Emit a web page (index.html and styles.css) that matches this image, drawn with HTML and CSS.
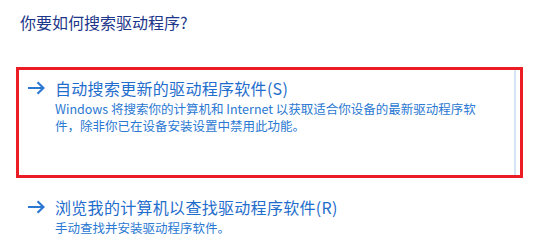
FILE: index.html
```html
<!DOCTYPE html>
<html lang="zh-CN">
<head>
<meta charset="utf-8">
<link rel="stylesheet" href="styles.css">
</head>
<body>
<div class="page">
  <h1 class="title">你要如何搜索驱动程序?</h1>
  <div class="options">
    <div class="highlight">
      <div class="option hovered">
        <svg class="arrow" width="18" height="14" viewBox="0 0 18 14"><path d="M1 7H16.5M10.5 1.2L16.5 7L10.5 12.8" fill="none" stroke="#2a78d2" stroke-width="2.2"/></svg>
        <div class="texts">
          <div class="head">自动搜索更新的驱动程序软件(S)</div>
          <div class="desc">Windows 将搜索你的计算机和 Internet 以获取适合你设备的最新驱动程序软件，除非你已在设备安装设置中禁用此功能。</div>
        </div>
      </div>
    </div>
    <div class="option plain">
      <svg class="arrow" width="18" height="14" viewBox="0 0 18 14"><path d="M1 7H16.5M10.5 1.2L16.5 7L10.5 12.8" fill="none" stroke="#2a78d2" stroke-width="2.2"/></svg>
      <div class="texts">
        <div class="head">浏览我的计算机以查找驱动程序软件(R)</div>
        <div class="desc">手动查找并安装驱动程序软件。</div>
      </div>
    </div>
  </div>
</div>
</body>
</html>
```
FILE: styles.css
```css
html, body {
  margin: 0;
  padding: 0;
  background: #ffffff;
}
body {
  font-family: "Noto Sans CJK SC", "Noto Sans", sans-serif;
}
.page {
  width: 543px;
  height: 247px;
  overflow: hidden;
}
.title {
  margin: 12px 0 0 20px;
  font-size: 16px;
  font-weight: normal;
  line-height: 20px;
  color: #1d368a;
}
.options {
  margin-top: 35px;
  margin-left: 16px;
  width: 507px;
}
.highlight {
  box-sizing: border-box;
  height: 111px;
  border: 3px solid #ec1c24;
  padding-right: 4px;
}
.option {
  display: flex;
  align-items: flex-start;
}
.hovered {
  box-sizing: border-box;
  height: 105px;
  border-right: 2px solid #d4e6f6;
  padding: 8px 0 0 8px;
}
.plain {
  padding: 19px 0 0 11px;
}
.arrow {
  flex: none;
  margin-top: 3px;
  margin-right: 10px;
}
.texts {
  width: 434px;
}
.head {
  font-size: 16px;
  letter-spacing: 0.3px;
  line-height: 20px;
  color: #1f6dcc;
}
.desc {
  margin-top: 2px;
  font-size: 12.5px;
  line-height: 17px;
  color: #2a78d2;
}
```
